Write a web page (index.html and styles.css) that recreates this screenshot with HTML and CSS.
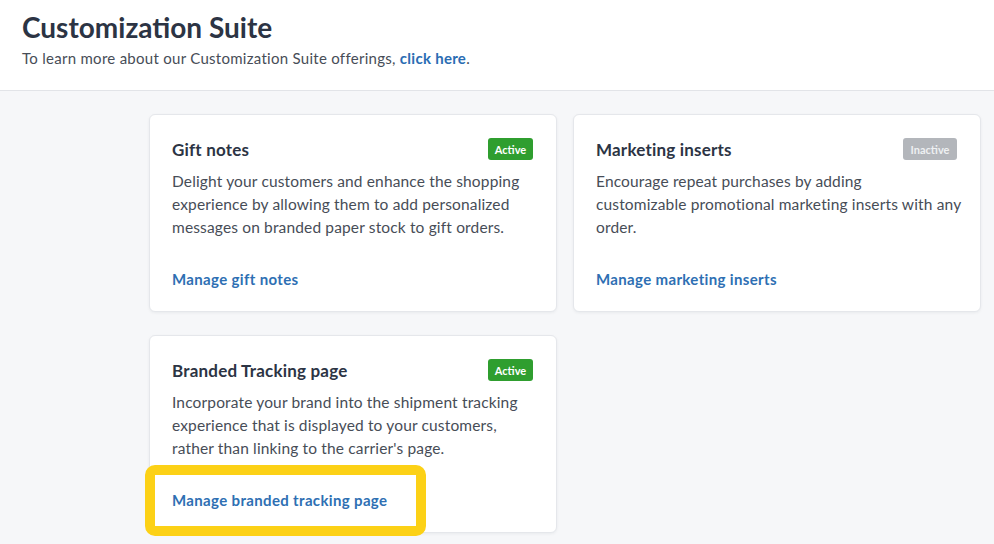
FILE: index.html
```html
<!DOCTYPE html>
<html>
<head>
<meta charset="utf-8">
<link rel="stylesheet" href="styles.css">
</head>
<body>
<header class="page-header">
  <h1 class="page-title">Customization Suite</h1>
  <p class="page-sub">To learn more about our Customization Suite offerings, <a class="link" href="#">click here</a>.</p>
</header>
<main class="content">
  <div class="grid">
    <section class="card">
      <div class="card-head">
        <h2 class="card-title">Gift notes</h2>
        <span class="badge badge-active">Active</span>
      </div>
      <p class="card-text">Delight your customers and enhance the shopping experience by allowing them to add personalized messages on branded paper stock to gift orders.</p>
      <div class="card-foot"><a class="card-link" href="#">Manage gift notes</a></div>
    </section>
    <section class="card">
      <div class="card-head">
        <h2 class="card-title">Marketing inserts</h2>
        <span class="badge badge-inactive">Inactive</span>
      </div>
      <p class="card-text">Encourage repeat purchases by adding<br>customizable promotional marketing inserts with any order.</p>
      <div class="card-foot"><a class="card-link" href="#">Manage marketing inserts</a></div>
    </section>
    <section class="card">
      <div class="card-head">
        <h2 class="card-title">Branded Tracking page</h2>
        <span class="badge badge-active">Active</span>
      </div>
      <p class="card-text">Incorporate your brand into the shipment tracking experience that is displayed to your customers, rather than linking to the carrier's page.</p>
      <div class="card-foot"><a class="card-link highlighted" href="#">Manage branded tracking page<span class="highlight"></span></a></div>
    </section>
  </div>
</main>
</body>
</html>
```
FILE: styles.css
```css
* { box-sizing: border-box; }
html, body { margin: 0; padding: 0; }
body {
  width: 994px;
  height: 544px;
  overflow: hidden;
  background: #f6f7f9;
  font-family: "Lato", "Liberation Sans", sans-serif;
  color: #2c3444;
}
.page-header {
  background: #ffffff;
  border-bottom: 1px solid #e2e4e8;
  height: 91px;
  padding: 10px 22px 0;
}
.page-title {
  margin: 0;
  font-size: 28px;
  line-height: 34px;
  font-weight: 700;
  color: #2c3444;
}
.page-sub {
  margin: 4px 0 0;
  font-size: 15px;
  line-height: 20px;
  letter-spacing: 0.28px;
  color: #474d57;
}
.link {
  color: #2a6db3;
  font-weight: 700;
  text-decoration: none;
}
.content {
  padding: 23px 13px 0 149px;
}
.grid {
  display: grid;
  grid-template-columns: 408px 408px;
  column-gap: 16px;
  row-gap: 23px;
}
.card {
  background: #ffffff;
  border: 1px solid #e5e7eb;
  border-radius: 6px;
  box-shadow: 0 1px 3px rgba(20, 30, 50, 0.06);
  height: 198px;
  padding: 23px 23px 0 22px;
}
.card-head {
  display: flex;
  align-items: center;
  justify-content: space-between;
  height: 22px;
}
.card-title {
  margin: 0;
  font-size: 17px;
  letter-spacing: 0.2px;
  font-weight: 700;
  color: #2c3444;
}
.badge {
  display: inline-flex;
  align-items: center;
  justify-content: center;
  height: 22px;
  padding: 0 8px;
  border-radius: 3px;
  font-size: 11px;
  font-weight: 700;
  color: #ffffff;
}
.badge-active { background: #2f9e2f; width: 45px; }
.badge-inactive { background: #b3b6bb; color: #eef0f2; width: 54px; }
.card-text {
  margin: 10px -6px 0 0;
  font-size: 15.5px;
  line-height: 23px;
  letter-spacing: 0.15px;
  height: 69px;
  color: #474d57;
}
.card-foot {
  margin-top: 29px;
  line-height: 22px;
}
.card-link {
  position: relative;
  display: inline-block;
  font-size: 15px;
  font-weight: 700;
  letter-spacing: 0.35px;
  color: #2e6fb3;
  text-decoration: none;
}
.highlight {
  position: absolute;
  left: -27px;
  top: -24px;
  width: 281px;
  height: 71px;
  border: 10px solid #fcd116;
  border-radius: 10px;
  pointer-events: none;
}
```
